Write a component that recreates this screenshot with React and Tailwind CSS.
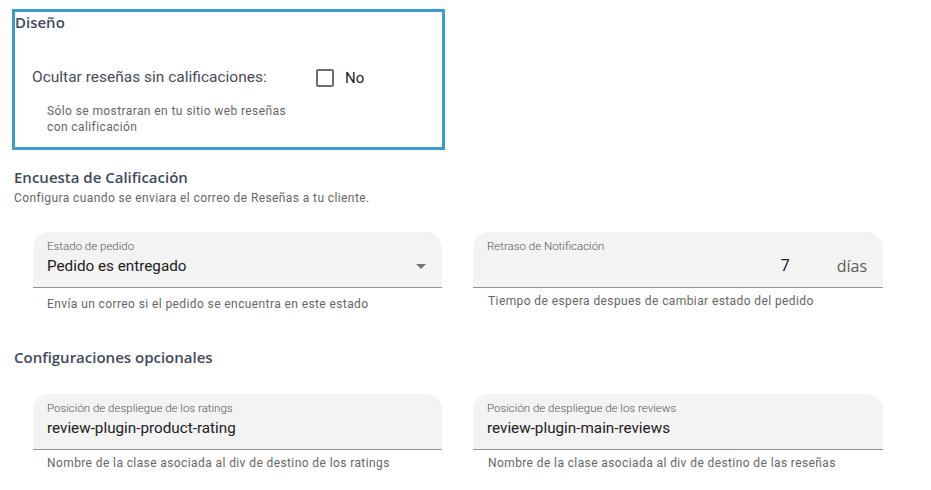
import React from "react"

const heading = "font-['Open_Sans',sans-serif] font-semibold text-[#3f4a5a]"
const helper = "font-[Roboto,sans-serif] text-[12px] leading-[16px] tracking-[0.4px] text-[#666666]"

const FilledField = ({ label, children }) => (
  <div className="h-[56px] rounded-t-[16px] bg-[#f3f3f3] border-b border-[#949494] px-[14px] pt-[6px] flex flex-col">
    <span className="text-[11.5px] leading-[16px] font-light text-[#555555]">{label}</span>
    {children}
  </div>
)

const App = () => {
  return (
    <div className="w-[931px] h-[490px] bg-white overflow-hidden font-[Roboto,sans-serif]">
      <div className="pt-[9px] pl-[12px]">
        <div className="w-[433px] h-[141px] border-[3px] border-[#3b9bd3]">
          <h3 className={`${heading} text-[15px] leading-[20px]`}>Diseño</h3>
          <div className="mt-[34px] pl-[17px] flex items-center h-[24px]">
            <span className="w-[284px] text-[15.5px] text-[#474c55]">Ocultar reseñas sin calificaciones:</span>
            <div className="w-[18px] h-[18px] rounded-[2px] border-2 border-[#6e6e6e]" />
            <span className="ml-[11px] text-[15px] text-[#222222]">No</span>
          </div>
          <p className={`${helper} leading-[14px] mt-[13px] ml-[32px] w-[245px]`}>
            Sólo se mostraran en tu sitio web reseñas con calificación
          </p>
        </div>
      </div>

      <div className="pl-[14px] mt-[15px]">
        <h3 className={`${heading} text-[15px] leading-[24px]`}>Encuesta de Calificación</h3>
        <p className={`${helper} mt-px`}>Configura cuando se enviara el correo de Reseñas a tu cliente.</p>
      </div>

      <div className="mt-[26px] pl-[33px] grid grid-cols-[409px_410px] gap-x-[31px]">
        <div>
          <FilledField label="Estado de pedido">
            <div className="flex items-center justify-between">
              <span className="text-[15.25px] leading-[24px] text-[#212121]">Pedido es entregado</span>
              <svg width="10" height="5" viewBox="0 0 10 5" className="mr-[2px]">
                <path d="M0 0l5 5 5-5z" fill="#757575" />
              </svg>
            </div>
          </FilledField>
          <p className={`${helper} mt-[8px] pl-[14px]`}>Envía un correo si el pedido se encuentra en este estado</p>
        </div>
        <div>
          <FilledField label="Retraso de Notificación">
            <div className="flex items-center justify-end pr-[2px]">
              <span className="text-[16px] leading-[24px] text-[#212121]">7</span>
              <span className="ml-[47px] font-['Open_Sans',sans-serif] text-[16px] leading-[24px] text-[#5c5c5c]">días</span>
            </div>
          </FilledField>
          <p className={`${helper} mt-[5px] pl-[15px]`}>Tiempo de espera despues de cambiar estado del pedido</p>
        </div>
      </div>

      <div className="pl-[14px] mt-[33px]">
        <h3 className={`${heading} text-[15px] leading-[24px]`}>Configuraciones opcionales</h3>
      </div>

      <div className="mt-[25px] pl-[33px] grid grid-cols-[409px_410px] gap-x-[31px]">
        <div>
          <FilledField label="Posición de despliegue de los ratings">
            <span className="text-[15.25px] leading-[24px] text-[#212121]">review-plugin-product-rating</span>
          </FilledField>
          <p className={`${helper} mt-[5px] pl-[14px]`}>Nombre de la clase asociada al div de destino de los ratings</p>
        </div>
        <div>
          <FilledField label="Posición de despliegue de los reviews">
            <span className="text-[15.25px] leading-[24px] text-[#212121]">review-plugin-main-reviews</span>
          </FilledField>
          <p className={`${helper} mt-[5px] pl-[15px]`}>Nombre de la clase asociada al div de destino de las reseñas</p>
        </div>
      </div>
    </div>
  )
}

export default App
